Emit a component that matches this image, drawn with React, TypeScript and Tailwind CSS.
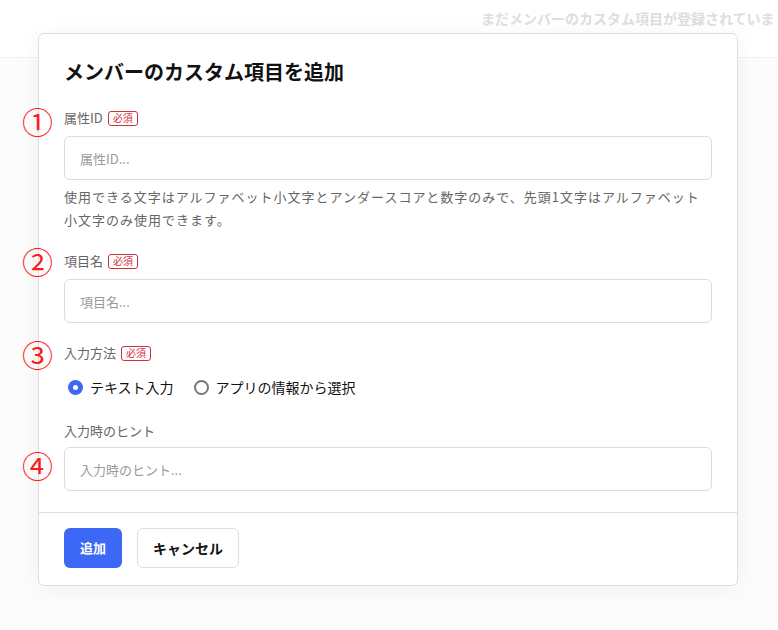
import { useState } from "react";

const font = { fontFamily: '"Noto Sans CJK JP", "Noto Sans", sans-serif' };

const Required = () => (
  <span className="ml-[5px] inline-flex h-[15px] items-center rounded-[3px] border border-[#d0313f] px-[4px] text-[10px] leading-none text-[#d0313f]">
    必須
  </span>
);

const Mark = ({ n, top }: { n: string; top: string }) => (
  <span className={`absolute left-[22px] ${top} text-[31px] leading-none text-[#ff1a1a]`}>{n}</span>
);

const Field = ({
  label,
  required,
  placeholder,
  gap = "mt-[8px]",
}: {
  label: string;
  required?: boolean;
  placeholder: string;
  gap?: string;
}) => (
  <div className="flex flex-col">
    <div className="flex h-[20px] items-center text-[13px] text-[#666]">
      {label}
      {required && <Required />}
    </div>
    <input
      placeholder={placeholder}
      className={`${gap} h-[44px] w-full rounded-[6px] border border-[#dcdcdc] px-[15px] text-[13px] text-[#333] placeholder:text-[#9a9a9a] outline-none`}
    />
  </div>
);

const Radio = ({ checked, label, onClick }: { checked: boolean; label: string; onClick: () => void }) => (
  <label className="flex cursor-pointer items-center gap-[7px]" onClick={onClick}>
    <span
      className={`flex h-[15px] w-[15px] items-center justify-center rounded-full ${
        checked ? "bg-[#3d68f5]" : "border-2 border-[#777]"
      }`}
    >
      {checked && <span className="h-[5px] w-[5px] rounded-full bg-white" />}
    </span>
    {label}
  </label>
);

export default function App() {
  const [mode, setMode] = useState("text");
  return (
    <div className="relative h-[630px] w-[778px] overflow-hidden bg-[#fcfcfc]" style={font}>
      <div className="h-[58px] overflow-hidden whitespace-nowrap border-b border-[#f2f2f2] bg-white pl-[481px] pt-[8px] text-[14px] font-bold text-[#dedede]">
        まだメンバーのカスタム項目が登録されていま
      </div>

      <div className="absolute left-[38px] top-[33px] w-[700px] rounded-[6px] border border-[#dddddd] bg-white shadow-[0_4px_24px_rgba(0,0,0,0.05)]">
        <div className="px-[25px] pt-[24px]">
          <h2 className="text-[20px] font-bold leading-[28px] text-[#111]">メンバーのカスタム項目を追加</h2>

          <div className="mt-[22px]">
            <Field label="属性ID" required placeholder="属性ID..." />
            <p className="mt-[5px] text-[13px] leading-[23px] tracking-[1px] text-[#666]">
              使用できる文字はアルファベット小文字とアンダースコアと数字のみで、先頭1文字はアルファベット小文字のみ使用できます。
            </p>
          </div>

          <div className="mt-[20px]">
            <Field label="項目名" required placeholder="項目名..." />
          </div>

          <div className="mt-[20px]">
            <div className="flex h-[20px] items-center text-[13px] text-[#666]">
              入力方法
              <Required />
            </div>
            <div className="mt-[14px] flex items-center gap-[20px] pl-[4px] text-[14px] text-[#111]">
              <Radio checked={mode === "text"} label="テキスト入力" onClick={() => setMode("text")} />
              <Radio checked={mode === "app"} label="アプリの情報から選択" onClick={() => setMode("app")} />
            </div>
          </div>

          <div className="mt-[23px] pb-[21px]">
            <Field label="入力時のヒント" placeholder="入力時のヒント..." gap="mt-[6px]" />
          </div>
        </div>

        <div className="flex gap-[15px] border-t border-[#dddddd] px-[25px] pb-[17px] pt-[15px]">
          <button className="h-[40px] w-[58px] rounded-[6px] bg-[#3d68f5] text-[13px] font-bold text-white">追加</button>
          <button className="h-[40px] w-[102px] rounded-[6px] border border-[#dddddd] bg-white text-[14px] font-bold text-[#111]">
            キャンセル
          </button>
        </div>
      </div>

      <Mark n="①" top="top-[105px]" />
      <Mark n="②" top="top-[245px]" />
      <Mark n="③" top="top-[338px]" />
      <Mark n="④" top="top-[449px]" />
    </div>
  );
}
